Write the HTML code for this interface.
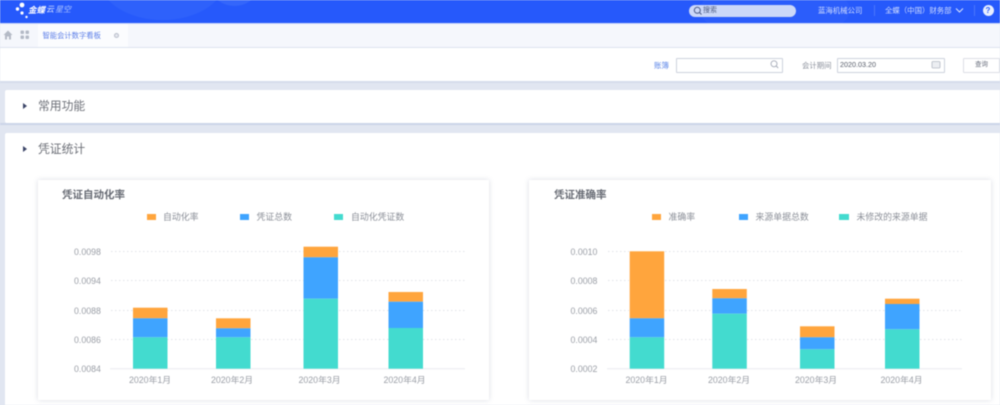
<!DOCTYPE html>
<html lang="zh">
<head>
<meta charset="utf-8">
<style>
html,body{margin:0;padding:0;width:1000px;height:405px;overflow:hidden;background:#e1e6f1}
body{position:relative;font-family:"Liberation Sans","Noto Sans CJK SC",sans-serif}
#p{position:absolute;left:0;top:0;width:1000px;height:405px;overflow:hidden;filter:blur(.45px)}
.a{position:absolute;white-space:nowrap;line-height:1}
.b{position:absolute}
</style>
</head>
<body>
<div id="p">
<!-- header -->
<div class="b" style="left:0;top:0;width:1000px;height:23px;background:#2659fb;overflow:hidden">
  <div class="b" style="left:100px;top:-60px;width:125px;height:80px;border-radius:50%;background:#2e61fb"></div>
  <div class="b" style="left:212px;top:-30px;width:45px;height:36px;border-radius:50%;background:#3466fb"></div>
  <div class="b" style="left:700px;top:-20px;width:150px;height:60px;border-radius:50%;background:#2b5dfb"></div>
</div>
<div class="b" style="left:0;top:23px;width:1000px;height:1px;background:#cdd9fa"></div>
<svg class="b" style="left:14px;top:2px" width="16" height="18"><circle cx="8" cy="3" r="2.4" fill="#fff"/><circle cx="3.5" cy="7" r="1.7" fill="#fff"/><circle cx="8" cy="11" r="1.6" fill="#fff"/><circle cx="12.5" cy="15" r="1.2" fill="#fff"/></svg>
<div class="a" style="left:28px;top:6px;font-size:8.500px;font-weight:bold;font-style:italic;color:#fff">金蝶</div>
<div class="a" style="left:46px;top:6px;font-size:8px;font-style:italic;color:#dfe7ff">云</div>
<div class="a" style="left:55px;top:6px;font-size:8px;font-style:italic;color:#a9c1ff">星空</div>
<!-- search -->
<div class="b" style="left:689px;top:4.500px;width:107px;height:12px;border-radius:6px;background:#ccd8f8"></div>
<svg class="b" style="left:693px;top:6px" width="10" height="10"><circle cx="4.300" cy="4.300" r="3" fill="none" stroke="#4a5a86" stroke-width="1"/><path d="M6.500 6.500L8.500 8.500" stroke="#4a5a86" stroke-width="1"/></svg>
<div class="a" style="left:703px;top:7px;font-size:7px;color:#4d5b82">搜索</div>
<div class="a" style="left:818px;top:6.500px;font-size:7.400px;color:#cfdcff">蓝海机械公司</div>
<div class="b" style="left:874px;top:5px;width:1px;height:11px;background:#4a76fb"></div>
<div class="a" style="left:885px;top:6.500px;font-size:7.400px;color:#cfdcff">全蝶（中国）财务部</div>
<svg class="b" style="left:955px;top:7px" width="9" height="7"><path d="M1 1.500L4.500 5L8 1.500" fill="none" stroke="#dbe5ff" stroke-width="1"/></svg>
<div class="b" style="left:974px;top:5px;width:1px;height:11px;background:#4a76fb"></div>
<div class="b" style="left:983px;top:5px;width:11px;height:11px;border-radius:50%;background:#e8eeff"></div>
<div class="a" style="left:985.500px;top:6.500px;font-size:8px;font-weight:bold;color:#2659fb">?</div>
<!-- tabs -->
<div class="b" style="left:0;top:24px;width:1000px;height:23px;background:#f5f7fc"></div>
<div class="b" style="left:38px;top:24px;width:90px;height:23px;background:#fbfcfe"></div>
<div class="b" style="left:0;top:47px;width:1000px;height:1px;background:#dde3ef"></div>
<svg class="b" style="left:3px;top:30px" width="10" height="10"><path d="M5 .5L.5 5H2V9.500H4V6.500H6V9.500H8V5H9.500Z" fill="#b4bac6"/></svg>
<svg class="b" style="left:20px;top:30px" width="10" height="10"><rect x="0.500" y="0.500" width="3.500" height="3.500" rx="1" fill="#b4bac6"/><rect x="5.500" y="0.500" width="3.500" height="3.500" rx="1" fill="#b4bac6"/><rect x="0.500" y="5.500" width="3.500" height="3.500" rx="1" fill="#b4bac6"/><rect x="5.500" y="5.500" width="3.500" height="3.500" rx="1" fill="#b4bac6"/></svg>
<div class="a" style="left:42.500px;top:32px;font-size:7.300px;color:#5d7fe8">智能会计数字看板</div>
<div class="b" style="left:113.500px;top:33px;width:3px;height:3px;border-radius:50%;border:1.500px solid #b8bdc9;background:#e4e7ee"></div>
<!-- filter -->
<div class="b" style="left:0;top:48px;width:1000px;height:33px;background:#fff"></div>
<div class="b" style="left:0;top:81px;width:1000px;height:2px;background:#d5dcec"></div>
<div class="a" style="left:654px;top:62px;font-size:7.500px;color:#5b85e8">账簿</div>
<div class="b" style="left:675.500px;top:58px;width:105px;height:13px;background:#fff;border:1px solid #cdd2dc;border-radius:1px"></div>
<svg class="b" style="left:770px;top:60px" width="10" height="9"><circle cx="4" cy="3.800" r="3" fill="none" stroke="#a5abb7" stroke-width=".9"/><path d="M6.200 6L8.200 8" stroke="#a5abb7" stroke-width=".9"/></svg>
<div class="a" style="left:802px;top:62px;font-size:7.400px;color:#8b909c">会计期间</div>
<div class="b" style="left:837px;top:58px;width:106px;height:13px;background:#fff;border:1px solid #cdd2dc;border-radius:1px"></div>
<div class="a" style="left:840px;top:61px;font-size:7.200px;color:#555b68">2020.03.20</div>
<svg class="b" style="left:931px;top:60px" width="10" height="9"><rect x="1" y="1.500" width="8" height="6.500" rx="1" fill="#eceef2" stroke="#b4b9c4" stroke-width=".8"/></svg>
<div class="b" style="left:962.500px;top:57.500px;width:35px;height:13px;background:#fff;border:1px solid #dcdfe6;border-radius:1px"></div>
<div class="a" style="left:975px;top:61.500px;font-size:6.500px;color:#6d7280">查询</div>
<!-- section 1 -->
<div class="b" style="left:5px;top:90px;width:995px;height:33px;background:#fff;border-radius:2px 0 0 2px"></div>
<div class="b" style="left:0;top:123px;width:1000px;height:1.500px;background:#ccd5e8"></div>
<svg class="b" style="left:22px;top:102px" width="6" height="8"><path d="M1 1L5 4L1 7Z" fill="#3c4668"/></svg>
<div class="a" style="left:38px;top:101px;font-size:11.800px;color:#6d7078">常用功能</div>
<!-- section 2 -->
<div class="b" style="left:5px;top:132.500px;width:995px;height:273px;background:#fff;border-radius:2px 0 0 0"></div>
<svg class="b" style="left:22px;top:145px" width="6" height="8"><path d="M1 1L5 4L1 7Z" fill="#3c4668"/></svg>
<div class="a" style="left:38px;top:143.500px;font-size:11.800px;color:#6d7078">凭证统计</div>
<!-- card 1 -->
<div class="b" style="left:38px;top:179.500px;width:451px;height:220px;background:#fff;box-shadow:0 0 5px rgba(90,100,130,.22)"></div>
<div class="a" style="left:62px;top:190px;font-size:10.500px;font-weight:bold;color:#666a73">凭证自动化率</div>
<div class="b" style="left:146.500px;top:213.500px;width:9px;height:6px;background:#ffa53d"></div>
<div class="a" style="left:163px;top:212.500px;font-size:8.900px;color:#8b8f98">自动化率</div>
<div class="b" style="left:240px;top:213.500px;width:9px;height:6px;background:#3fa4ff"></div>
<div class="a" style="left:256.500px;top:212.500px;font-size:8.900px;color:#8b8f98">凭证总数</div>
<div class="b" style="left:333.500px;top:213.500px;width:9.500px;height:6px;background:#43dbcf"></div>
<div class="a" style="left:351px;top:212.500px;font-size:8.900px;color:#8b8f98">自动化凭证数</div>
<svg class="b" style="left:0;top:0" width="1000" height="405">
 <g stroke="#e2e4e9" stroke-width="1" stroke-dasharray="1.500 2.500" fill="none">
  <path d="M111 251.500H465M111 280.500H465M111 310.500H465M111 339.500H465"/>
 </g>
 <path d="M110 368.800H465" stroke="#e9ebef" stroke-width="1"/>
 <g>
  <rect x="133" y="307.700" width="34.500" height="10.600" fill="#ffa53d"/><rect x="133" y="318.300" width="34.500" height="19" fill="#3fa4ff"/><rect x="133" y="337.300" width="34.500" height="31.400" fill="#43dbcf"/>
  <rect x="216" y="318.300" width="34.500" height="10" fill="#ffa53d"/><rect x="216" y="328.300" width="34.500" height="9" fill="#3fa4ff"/><rect x="216" y="337.300" width="34.500" height="31.400" fill="#43dbcf"/>
  <rect x="303.500" y="246.700" width="34.500" height="10.600" fill="#ffa53d"/><rect x="303.500" y="257.300" width="34.500" height="41.400" fill="#3fa4ff"/><rect x="303.500" y="298.700" width="34.500" height="70" fill="#43dbcf"/>
  <rect x="388.500" y="292" width="34.500" height="9.700" fill="#ffa53d"/><rect x="388.500" y="301.700" width="34.500" height="26.300" fill="#3fa4ff"/><rect x="388.500" y="328" width="34.500" height="40.700" fill="#43dbcf"/>
 </g>
</svg>
<div class="a" style="left:74px;top:248px;font-size:8.800px;color:#9a9ea6">0.0098</div>
<div class="a" style="left:74px;top:277px;font-size:8.800px;color:#9a9ea6">0.0094</div>
<div class="a" style="left:74px;top:307px;font-size:8.800px;color:#9a9ea6">0.0088</div>
<div class="a" style="left:74px;top:336px;font-size:8.800px;color:#9a9ea6">0.0086</div>
<div class="a" style="left:74px;top:365px;font-size:8.800px;color:#9a9ea6">0.0084</div>
<div class="a" style="left:129px;top:376px;font-size:8.800px;color:#9a9ea6">2020年1月</div>
<div class="a" style="left:211px;top:376px;font-size:8.800px;color:#9a9ea6">2020年2月</div>
<div class="a" style="left:298.500px;top:376px;font-size:8.800px;color:#9a9ea6">2020年3月</div>
<div class="a" style="left:383.500px;top:376px;font-size:8.800px;color:#9a9ea6">2020年4月</div>
<!-- card 2 -->
<div class="b" style="left:529px;top:179.500px;width:462px;height:220px;background:#fff;box-shadow:0 0 5px rgba(90,100,130,.22);z-index:0"></div>
<svg class="b" style="left:0;top:0;z-index:1" width="1000" height="405">
 <g stroke="#e2e4e9" stroke-width="1" stroke-dasharray="1.500 2.500" fill="none"><path d="M608 251.500H629M665 251.500H962M608 280.500H629M665 280.500H962M608 310.500H629M665 310.500H712M747 310.500H962M608 339.500H629M665 339.500H712M747 339.500H800M835 339.500H885M920 339.500H962"/></g>
 <path d="M607 368.800H962" stroke="#e9ebef" stroke-width="1"/>
 <rect x="629.700" y="251.300" width="34.500" height="67" fill="#ffa53d"/><rect x="629.700" y="318.300" width="34.500" height="19" fill="#3fa4ff"/><rect x="629.700" y="337.300" width="34.500" height="31.400" fill="#43dbcf"/>
 <rect x="712.300" y="289" width="34.500" height="9.300" fill="#ffa53d"/><rect x="712.300" y="298.300" width="34.500" height="15.400" fill="#3fa4ff"/><rect x="712.300" y="313.700" width="34.500" height="55" fill="#43dbcf"/>
 <rect x="800" y="326.300" width="34.500" height="11" fill="#ffa53d"/><rect x="800" y="337.300" width="34.500" height="12" fill="#3fa4ff"/><rect x="800" y="349.300" width="34.500" height="19.400" fill="#43dbcf"/>
 <rect x="885" y="298.700" width="34.500" height="5.300" fill="#ffa53d"/><rect x="885" y="304" width="34.500" height="25.300" fill="#3fa4ff"/><rect x="885" y="329.300" width="34.500" height="39.400" fill="#43dbcf"/>
</svg>
<div style="position:absolute;left:0;top:0;z-index:2">
<div class="a" style="left:554px;top:190px;font-size:10.500px;font-weight:bold;color:#666a73">凭证准确率</div>
<div class="b" style="left:652px;top:213.500px;width:9px;height:6px;background:#ffa53d"></div>
<div class="a" style="left:668.500px;top:212.500px;font-size:8.900px;color:#8b8f98">准确率</div>
<div class="b" style="left:738.500px;top:213.500px;width:9px;height:6px;background:#3fa4ff"></div>
<div class="a" style="left:755.500px;top:212.500px;font-size:8.900px;color:#8b8f98">来源单据总数</div>
<div class="b" style="left:839px;top:213.500px;width:9.500px;height:6px;background:#43dbcf"></div>
<div class="a" style="left:856.500px;top:212.500px;font-size:8.900px;color:#8b8f98">未修改的来源单据</div>
<div class="a" style="left:570.500px;top:248px;font-size:8.800px;color:#9a9ea6">0.0010</div>
<div class="a" style="left:570.500px;top:277px;font-size:8.800px;color:#9a9ea6">0.0008</div>
<div class="a" style="left:570.500px;top:307px;font-size:8.800px;color:#9a9ea6">0.0006</div>
<div class="a" style="left:570.500px;top:336px;font-size:8.800px;color:#9a9ea6">0.0004</div>
<div class="a" style="left:570.500px;top:365px;font-size:8.800px;color:#9a9ea6">0.0002</div>
<div class="a" style="left:625.500px;top:376px;font-size:8.800px;color:#9a9ea6">2020年1月</div>
<div class="a" style="left:708px;top:376px;font-size:8.800px;color:#9a9ea6">2020年2月</div>
<div class="a" style="left:795px;top:376px;font-size:8.800px;color:#9a9ea6">2020年3月</div>
<div class="a" style="left:880.500px;top:376px;font-size:8.800px;color:#9a9ea6">2020年4月</div>
</div>
</div>
</body>
</html>
